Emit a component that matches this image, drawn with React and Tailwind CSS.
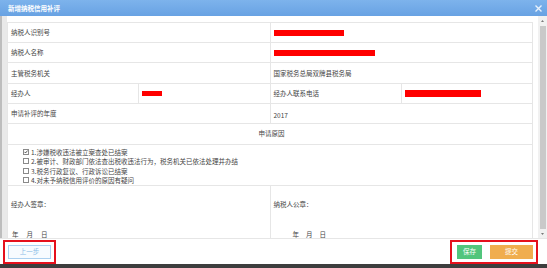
import React from "react";

const F = { fontFamily: '"Noto Sans CJK SC", "Noto Sans", sans-serif' };

function Cell({ children, className = "" }) {
  return (
    <div className={"border-r border-b border-[#e6e6e6] flex items-center pl-[3px] " + className}>
      {children}
    </div>
  );
}

function Bar({ w, h, ml = 0 }) {
  return <div className="bg-[#ff0000]" style={{ width: w, height: h, marginLeft: ml }} />;
}

function Check({ checked, text }) {
  return (
    <div className="flex items-center h-[9.5px]">
      <div className="w-[6px] h-[6px] border border-[#8a8a8a] bg-white flex items-center justify-center mr-[2px]">
        {checked && (
          <svg width="6" height="6" viewBox="0 0 6 6">
            <path d="M0.8 2.8 L2.3 4.5 L5.4 0.8" stroke="#222" strokeWidth="1.1" fill="none" />
          </svg>
        )}
      </div>
      <span>{text}</span>
    </div>
  );
}

export default function App() {
  return (
    <div
      className="w-[547px] h-[268px] flex flex-col bg-white overflow-hidden text-[6.5px] leading-none text-[#444]"
      style={F}
    >
      {/* title bar */}
      <div className="h-[16px] bg-gradient-to-b from-[#7db3ec] to-[#68a2e3] flex items-center justify-between pl-[8px] pr-[4px] shrink-0">
        <span className="text-white font-bold text-[6.5px]">新增纳税信用补评</span>
        <svg width="7" height="7" viewBox="0 0 7 7" className="mr-[1px]">
          <path d="M0.5 0.5 L6.5 6.5 M6.5 0.5 L0.5 6.5" stroke="#e8f2fc" strokeWidth="1.4" />
        </svg>
      </div>

      {/* body */}
      <div className="h-[222px] flex shrink-0">
        <div className="w-[7px] bg-[#e9e9e9] border-l-2 border-[#bdbdbd] shrink-0" />
        <div className="w-[526px] pt-[6px] overflow-hidden shrink-0">
          <div className="grid grid-cols-4 border-t border-l border-[#e6e6e6]">
            <Cell className="col-span-2 h-[20px]">纳税人识别号</Cell>
            <Cell className="col-span-2 h-[20px] pl-[1px]"><Bar w={70} h={6} /></Cell>

            <Cell className="col-span-2 h-[20px]">纳税人名称</Cell>
            <Cell className="col-span-2 h-[20px] pl-[1px]"><Bar w={101} h={6} /></Cell>

            <Cell className="col-span-2 h-[21px]">主管税务机关</Cell>
            <Cell className="col-span-2 h-[21px] pl-[2px]">国家税务总局双牌县税务局</Cell>

            <Cell className="h-[20px]">经办人</Cell>
            <Cell className="h-[20px] pl-0"><Bar w={20} h={5} /></Cell>
            <Cell className="h-[20px] pl-[2px]">经办人联系电话</Cell>
            <Cell className="h-[20px] pl-0"><Bar w={76} h={7} /></Cell>

            <Cell className="col-span-2 h-[20px] items-start pt-[6px]">申请补评的年度</Cell>
            <Cell className="col-span-2 h-[20px] pl-[2px] pt-[3px]">2017</Cell>

            <Cell className="col-span-4 h-[21px] justify-center pl-0 pb-[1px]">申请原因</Cell>

            <div className="col-span-4 border-r border-b border-[#e6e6e6] pl-[15px] pt-[2px] pb-[2px] h-[41px]">
              <Check checked text="1.涉嫌税收违法被立案查处已结案" />
              <Check text="2.被审计、财政部门依法查出税收违法行为，税务机关已依法处理并办结" />
              <Check text="3.税务行政复议、行政诉讼已结案" />
              <Check text="4.对未予纳税信用评价的原因有疑问" />
            </div>

            <div className="col-span-2 border-r border-[#e6e6e6] h-[70px] pl-[3px] pt-[15px]">
              <div>经办人签章：</div>
              <div className="mt-[23px] flex gap-[8px] pl-[1px]">
                <span>年</span><span>月</span><span>日</span>
              </div>
            </div>
            <div className="col-span-2 border-r border-[#e6e6e6] h-[70px] pl-[3px] pt-[15px]">
              <div>纳税人公章：</div>
              <div className="mt-[23px] flex gap-[7px] pl-[19px]">
                <span>年</span><span>月</span><span>日</span>
              </div>
            </div>
          </div>
        </div>
        <div className="w-[5px] shrink-0" />
        {/* scrollbar */}
        <div className="w-[9px] bg-[#f1f1f1] flex flex-col items-center pt-[2px] pb-[2px] shrink-0">
          <svg width="5" height="4" viewBox="0 0 5 4" className="mt-[1px]">
            <path d="M2.5 1 L4 3 L1 3 Z" fill="#7a7a7a" />
          </svg>
          <div className="w-[6px] ml-[1px] flex-1 mt-[3px] mb-[3px] bg-[#c9c9c9]" />
          <svg width="5" height="4" viewBox="0 0 5 4">
            <path d="M1 1 L4 1 L2.5 3 Z" fill="#7a7a7a" />
          </svg>
        </div>
      </div>

      {/* footer */}
      <div className="h-[26px] flex items-center justify-between border-t border-[#e6e6e6] pl-[3px] pr-[9px] shrink-0">
        <div className="w-[53px] h-[24px] border-2 border-[#e5101c] flex items-center justify-center">
          <div className="w-[43px] h-[14px] border border-[#acd0f0] bg-[#f7fbff] text-[#8cbbe6] flex items-center justify-center">
            上一步
          </div>
        </div>
        <div className="w-[88px] h-[24px] border-2 border-[#e5101c] flex items-center pl-[5px] gap-[8px]">
          <div className="w-[25px] h-[14px] bg-[#52c57c] text-white flex items-center justify-center">保存</div>
          <div className="w-[43px] h-[14px] bg-[#f0ad4e] text-white flex items-center justify-center">提交</div>
        </div>
      </div>

      <div className="flex-1 bg-[#3d3d3d]" />
    </div>
  );
}
